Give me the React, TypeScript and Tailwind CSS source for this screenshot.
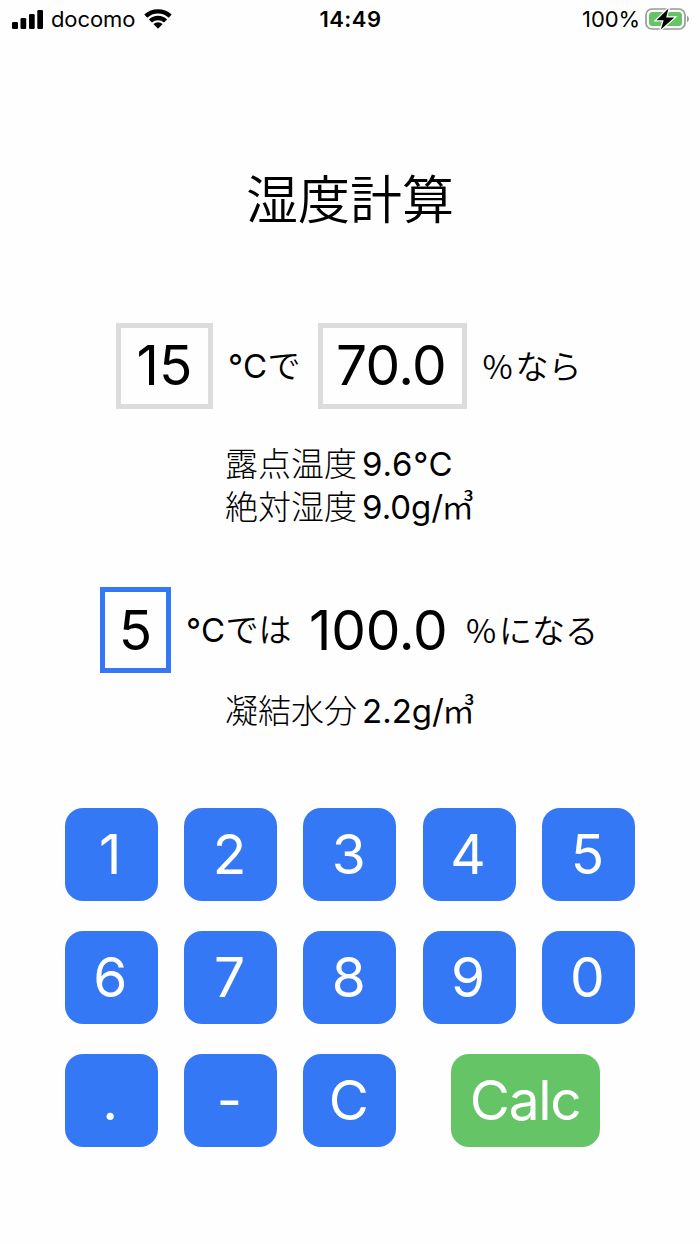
import type { ReactNode } from "react";

type KeyItem = { label: string; kind?: "calc" };

const keyRows: KeyItem[][] = [
  [{ label: "1" }, { label: "2" }, { label: "3" }, { label: "4" }, { label: "5" }],
  [{ label: "6" }, { label: "7" }, { label: "8" }, { label: "9" }, { label: "0" }],
  [{ label: "." }, { label: "-" }, { label: "C" }, { label: "Calc", kind: "calc" }],
];

function StatusBar() {
  return (
    <header className="grid h-[38px] grid-cols-3 items-center pl-3 pr-[11px] text-[22px] leading-none">
      <div className="flex items-center">
        <svg className="h-[19px] w-[31px]" viewBox="0 0 31 19">
          <rect x="0" y="12" width="6" height="7" rx="1.3" />
          <rect x="8.5" y="8" width="5.7" height="11" rx="1.3" />
          <rect x="17" y="4" width="5.7" height="15" rx="1.3" />
          <rect x="25.3" y="0" width="5.7" height="19" rx="1.3" />
        </svg>
        <span className="ml-2 tracking-[-0.1px]">docomo</span>
        <svg className="ml-[9px] h-[20px] w-[28px]" viewBox="0 0 28 20">
          <path d="M.3 5.6a20 20 0 0 1 27.4 0l-3 3.2a15.6 15.6 0 0 0-21.4 0z" />
          <path d="M4.9 10.4a13.3 13.3 0 0 1 18.2 0l-3.1 3.2a8.8 8.8 0 0 0-12 0z" />
          <path d="M9.4 15a7 7 0 0 1 9.2 0L14 19.8z" />
        </svg>
      </div>
      <span className="text-center text-[22px] font-semibold tracking-[0.5px]">14:49</span>
      <div className="flex items-center justify-end">
        <span className="tracking-[-0.1px]">100%</span>
        <svg className="-mr-px ml-[5px] h-[24px] w-[45px]" viewBox="0 0 45 24">
          <rect x="1" y="2" width="39" height="20" rx="6" fill="none" stroke="#999" strokeWidth="1.7" />
          <rect x="4" y="5" width="33" height="14" rx="3.5" fill="#65c466" />
          <path d="M42 8.5q4 3.5 0 7z" fill="#999" />
          <path d="M23.5 1.5L11.5 13.2h7.2L15.8 22.5l13.5-12h-8.2z" fill="white" stroke="white" strokeWidth="2.5" />
          <path d="M23.5 1.5L11.5 13.2h7.2L15.8 22.5l13.5-12h-8.2z" />
        </svg>
      </div>
    </header>
  );
}

function Field({ className, children }: { className: string; children: ReactNode }) {
  return (
    <div className={`flex h-[86px] items-center justify-center border-[5px] text-[55px] leading-none ${className}`}>
      {children}
    </div>
  );
}

function Celsius({ suffix, className }: { suffix: string; className: string }) {
  return (
    <span className={`ml-[15px] pt-0.5 ${className}`}>
      <span className="tracking-[0.3px]">°C</span>
      <span className="font-[350]">{suffix}</span>
    </span>
  );
}

function Percent({ suffix }: { suffix: string }) {
  return (
    <span className="ml-[16px] flex font-['Noto_Sans_CJK_JP',sans-serif] font-[350]">
      <span className="w-[33px]">%</span>
      {suffix}
    </span>
  );
}

function Result({ label, value, unit }: { label: string; value: string; unit?: string }) {
  return (
    <p className="flex">
      <span className="font-light">{label}</span>
      <span className={`ml-[5px] ${unit ? "" : "tracking-[0.8px]"}`}>{value}</span>
      {unit && <span className="-ml-[2px] font-[350]">{unit}</span>}
    </p>
  );
}

export default function App() {
  return (
    <main className="h-[1244px] w-[700px] bg-[#fefefe] font-['Inter','Noto_Sans_CJK_JP',sans-serif] text-black">
      <StatusBar />
      <h1 className="mt-[125px] text-center text-[52px] font-[350] leading-[76px]">湿度計算</h1>
      <section className="mt-[83.5px] flex items-center pl-[116px] text-[33px]">
        <Field className="w-[97px] border-[#dcdcdc]">15</Field>
        <Celsius className="w-[89.5px]" suffix="で" />
        <Field className="w-[149px] border-[#dcdcdc] pr-[2px] tracking-[-0.7px]">70.0</Field>
        <Percent suffix="なら" />
      </section>
      <section className="mt-[34.5px] pl-[225px] text-[33px] leading-[43px]">
        <Result label="露点温度" value="9.6°C" />
        <Result label="絶対湿度" value="9.0g/" unit="㎥" />
      </section>
      <section className="mt-[58px] flex items-center pl-[100px] text-[33px]">
        <Field className="w-[71px] border-[#3478f6]">5</Field>
        <Celsius className="w-[123px]" suffix="では" />
        <span className="w-[141px] text-[55px] leading-none tracking-[-0.2px]">100.0</span>
        <Percent suffix="になる" />
      </section>
      <section className="mt-[17px] pl-[225px] text-[33px] leading-[43px]">
        <Result label="凝結水分" value="2.2g/" unit="㎥" />
      </section>
      <section className="mt-[75px] flex flex-col gap-[30px] pl-[64.7px] text-[55px] text-white">
        {keyRows.map((row, index) => (
          <div className="flex gap-[26.3px]" key={index}>
            {row.map((item) => (
              <button
                className={`h-[93px] rounded-[18px] leading-none ${item.kind === "calc" ? "ml-[28px] w-[149px] bg-[#65c466] tracking-[-1.3px]" : "w-[93px] bg-[#3478f6] pr-[2px]"}`}
                key={item.label}
              >
                {item.label}
              </button>
            ))}
          </div>
        ))}
      </section>
    </main>
  );
}
